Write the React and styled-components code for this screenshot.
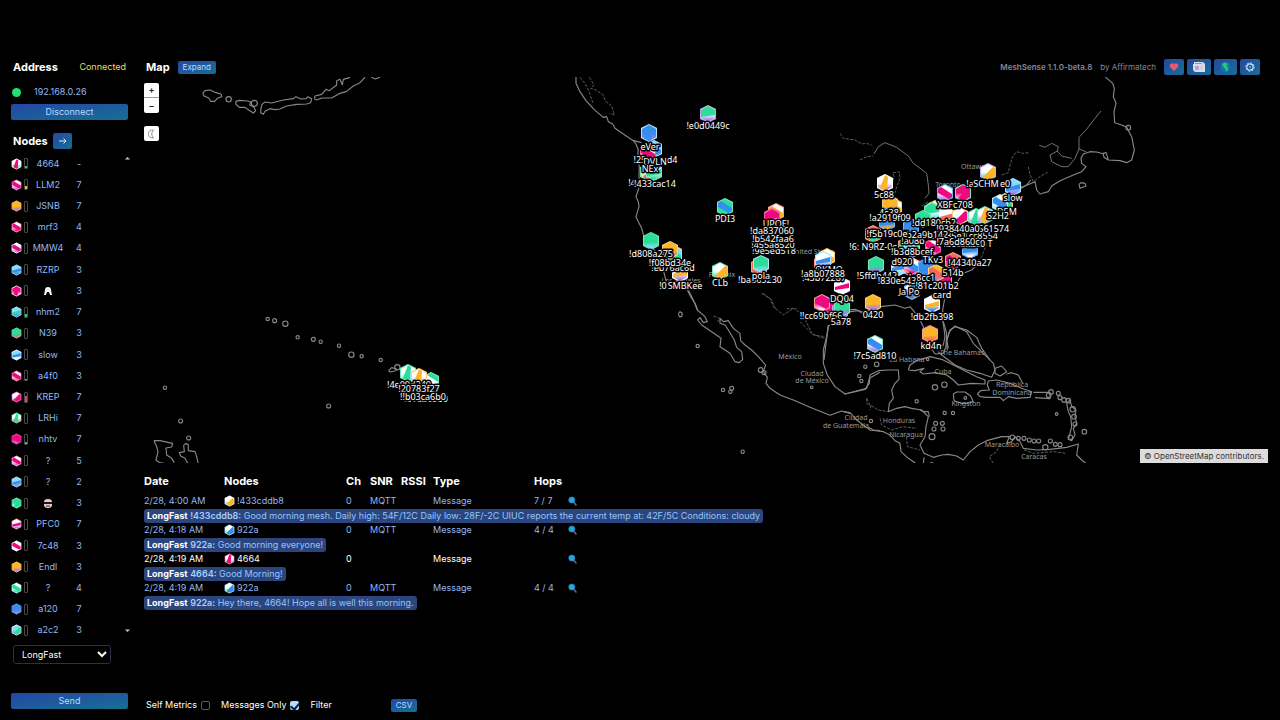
import React from "react";
import styled, { createGlobalStyle } from "styled-components";

const GlobalStyle = createGlobalStyle`
  * {
    box-sizing: border-box;
  }

  body {
    margin: 0;
    background: #000;
    color: #fff;
    font-family: Inter, "Liberation Sans", sans-serif;
    font-size: 9px;
    line-height: 14px;
  }

  button,
  input,
  select {
    font: inherit;
    color: inherit;
  }
`;

const Page = styled.div`
  min-height: 100vh;
  padding: 57px 12px 0 11px;
  display: grid;
  grid-template-columns: 117px minmax(0, 1fr);
  column-gap: 16px;
`;

const Sidebar = styled.aside`
  display: flex;
  flex-direction: column;
  padding-bottom: 11px;
`;

const Main = styled.main`
  display: flex;
  flex-direction: column;
`;

const Title = styled.h2`
  margin: 0;
  font-size: 11px;
  font-weight: 700;
`;

const BarRow = styled.div`
  display: flex;
  align-items: center;
  gap: 8px;
  height: 20px;
  padding: 0 2px;
`;

const Connected = styled.span`
  margin-left: auto;
  color: #e6de62;
`;

const Address = styled.div`
  display: flex;
  align-items: center;
  gap: 13px;
  margin: 8px 0 5px;
  padding-left: 1px;
  color: #93b8f5;
`;

const Dot = styled.span`
  width: 9px;
  height: 9px;
  border-radius: 50%;
  background: #1fe070;
`;

const Button = styled.button`
  display: flex;
  align-items: center;
  justify-content: center;
  height: ${(p) => (p.$small ? 13 : 16)}px;
  width: ${(p) => (p.$wide ? "100%" : "auto")};
  padding: 0 5px;
  border: 0;
  border-radius: 2px;
  background: linear-gradient(to bottom right, #2447a6, #176f93);
  color: #b9dcfb;
  font-size: ${(p) => (p.$small ? 8 : 9)}px;
  line-height: 12px;
`;

const NodesBar = styled(BarRow)`
  margin: 11px 0 2px;
  gap: 5px;
`;

const NodeArea = styled.div`
  flex: 1;
  display: flex;
  justify-content: space-between;
`;

const NodeList = styled.ul`
  display: flex;
  flex-direction: column;
  margin: 0;
  padding: 0;
  list-style: none;
`;

const NodeItem = styled.li`
  flex: 1;
  display: grid;
  grid-template-columns: 11px 4px 36px 22px;
  align-items: center;
  column-gap: 2px;
  color: #93b8f5;
  text-align: center;
`;

const NodeName = styled.span`
  display: flex;
  justify-content: center;
  white-space: nowrap;
`;

const Battery = styled.span`
  display: flex;
  align-items: flex-end;
  height: 11px;
  border: 1px solid #4a4a4a;
  border-radius: 1px;
`;

const Charge = styled.span`
  width: 100%;
  background: ${(p) => p.$color};
`;

const ScrollTrack = styled.div`
  display: flex;
  flex-direction: column;
  justify-content: space-between;
  padding: 3px 0 8px;
  margin-right: -3px;
`;

const ChannelSelect = styled.select`
  width: 98px;
  height: 19px;
  margin: 4px 0 29px 2px;
  padding: 0 0 0 4px;
  border: 1px solid #2a2f4a;
  border-radius: 3px;
  background: #000;
`;

const About = styled.div`
  display: flex;
  align-items: center;
  gap: 8px;
  margin-left: auto;
  padding-right: 6px;
  color: #83869c;
  font-size: 8px;
`;

const Version = styled.span`
  font-weight: 600;
`;

const IconButtons = styled.div`
  display: flex;
  gap: 3px;
`;

const MapPanel = styled.section`
  position: relative;
  flex: 3 1 0;
  min-height: 0;
  overflow: hidden;
`;

const MapSvg = styled.svg`
  position: absolute;
  inset: 0;
  width: 100%;
  height: 100%;
  font-family: "Noto Sans", sans-serif;
`;

const MapControls = styled.div`
  position: absolute;
  top: 6px;
  left: 0;
  display: flex;
  flex-direction: column;
`;

const MapButton = styled.button`
  display: flex;
  align-items: center;
  justify-content: center;
  width: 15px;
  height: 15px;
  padding: 0;
  border: 0;
  border-bottom: ${(p) => (p.$divided ? "1px solid #999" : "0")};
  border-radius: ${(p) => p.$radius || "2px"};
  margin-top: ${(p) => p.$space || 0}px;
  background: #fff;
  color: #222;
  font-weight: 600;
`;

const Attribution = styled.div`
  position: absolute;
  right: 0;
  bottom: 0;
  padding: 0 4px;
  background: #dcdcdc;
  color: #333;
  font-size: 8px;
`;

const Log = styled.section`
  flex: 2 1 0;
  display: flex;
  flex-direction: column;
`;

const LogTable = styled.table`
  border-collapse: collapse;
  table-layout: fixed;
  width: 100%;
  white-space: nowrap;

  th,
  td {
    padding: 0;
    text-align: left;
  }

  th {
    height: 31px;
    padding-top: 5px;
    font-size: 11px;
    font-weight: 700;
  }
`;

const LogRow = styled.tr`
  height: 15px;
  color: ${(p) => (p.$own ? "#fff" : "#93b8f5")};
`;

const NodeCell = styled.span`
  display: flex;
  align-items: center;
  gap: 2px;
`;

const Message = styled.div`
  width: fit-content;
  padding: 0 3px;
  border-radius: 3px;
  background: #2b457f;
  color: #93c5fd;

  b {
    color: #fff;
  }

  strong {
    color: #a5cffb;
    font-weight: 600;
  }
`;

const PlainButton = styled.button`
  display: flex;
  padding: 0;
  border: 0;
  background: none;
`;

const Footer = styled.footer`
  display: flex;
  align-items: center;
  margin-top: auto;
  padding: 0 2px 8px;
`;

const Check = styled.label`
  display: flex;
  align-items: center;
  gap: 4px;
  margin-right: 11px;

  input {
    appearance: none;
    display: grid;
    place-items: center;
    width: 9px;
    height: 9px;
    margin: 0;
    border: 1px solid #5b5b5b;
    border-radius: 2px;
    background: #000;
  }

  input:checked {
    border: 0;
    background: #b5daff;
  }

  input:checked::after {
    content: "";
    width: 4px;
    height: 7px;
    border: solid #0b1f40;
    border-width: 0 2px 2px 0;
    transform: rotate(40deg);
  }
`;

const FilterInput = styled.input`
  width: 53px;
  height: 14px;
  margin: 0 3px;
  padding: 0;
  border: 0;
  background: #000;
`;

const HiddenSvg = styled.svg`
  position: absolute;
`;

const COLORS = {
  p: "#f0087f",
  o: "#fdb428",
  g: "#2ade98",
  b: "#348ef0",
  w: "#ffffff",
  v: "#a878ee",
  c: "#84dcf8",
  r: "#f46a5c",
};

const FACETS = [
  "-7,-4 0,-8 7,-4 7,1 -7,3",
  "-7,-4 -4,-6 7,1 7,4 4,6 -7,0",
  "0,-8 3,-6 2,7 0,8 -5,5",
  "5,-5 7,-4 7,4 0,8 -5,5",
  "-7,1 7,-3 7,2 -7,4",
];

const HexDefs = () => (
  <HiddenSvg width="0" height="0" aria-hidden="true">
    <defs>
      {Object.keys(COLORS).map((key) => (
        <linearGradient key={key} id={`fade-${key}`} x1="0" y1="0" x2="0" y2="1">
          <stop offset="0.5" stopColor={COLORS[key]} stopOpacity="0" />
          <stop offset="0.9" stopColor={COLORS[key]} />
        </linearGradient>
      ))}
    </defs>
  </HiddenSvg>
);

// code: base, facet, lower corner, ring, then the facet index
const Hex = ({ code }) => {
  const [base, facet, corner, ring, shape] = code;
  return (
    <g>
      <polygon points="0,-9 8,-5 8,5 0,9 -8,5 -8,-5" fill={COLORS[ring]} />
      <polygon points="0,-9 8,-5 8,5 0,9 -8,5 -8,-5" fill="#fff" opacity="0.35" />
      <polygon points="0,-8 7,-4 7,4 0,8 -7,4 -7,-4" fill={COLORS[base]} />
      <polygon points="0,-8 7,-4 7,4 0,8 -7,4 -7,-4" fill={`url(#fade-${corner})`} />
      <polygon points={FACETS[shape]} fill={COLORS[facet]} />
    </g>
  );
};

const HexIcon = ({ code }) => (
  <svg width="11" height="12" viewBox="-9 -10 18 20">
    <Hex code={code} />
  </svg>
);

const NODES = [
  { name: "4664", hops: "-", code: "wpgw2", level: 2, color: "#2bd06a" },
  { name: "LLM2", hops: 7, code: "wpvp1", level: 3, color: "#d8d040" },
  { name: "JSNB", hops: 7, code: "oovo0" },
  { name: "mrf3", hops: 4, code: "wppr1" },
  { name: "MMW4", hops: 4, code: "wpvw1" },
  { name: "RZRP", hops: 3, code: "cbbc4" },
  { name: "hood", hops: 3, code: "ppww2" },
  { name: "nhm2", hops: 7, code: "cgbc4", level: 3, color: "#2bd06a" },
  { name: "N39", hops: 3, code: "ggrg0" },
  { name: "slow", hops: 3, code: "cbww4" },
  { name: "a4f0", hops: 3, code: "wprp1", level: 1, color: "#2bd06a" },
  { name: "KREP", hops: 7, code: "wpvp3", level: 6, color: "#d04a62" },
  { name: "LRHi", hops: 7, code: "wgrg2" },
  { name: "nhtv", hops: 7, code: "ppvp1", level: 2, color: "#2bd06a" },
  { name: "?", hops: 5, code: "wpvr1" },
  { name: "?", hops: 2, code: "cbvc4" },
  { name: "mask", hops: 3, code: "ggwg3" },
  { name: "PFC0", hops: 7, code: "wpvr4" },
  { name: "7c48", hops: 3, code: "wpww1" },
  { name: "Endl", hops: 3, code: "oovo0" },
  { name: "?", hops: 4, code: "wggc1" },
  { name: "a120", hops: 7, code: "bbvb0" },
  { name: "a2c2", hops: 3, code: "cgvw3" },
];

const GLYPHS = {
  hood: (
    <svg width="10" height="10" viewBox="0 0 10 10" role="img" aria-label="hood">
      <path d="M1 9 2 4a3 3 0 0 1 6 0l1 5-2 0-1-3H4L3 9z" fill="#f2f2f2" />
      <path d="M4 9 5 6l1 3z" fill="#000" />
    </svg>
  ),
  mask: (
    <svg width="10" height="10" viewBox="0 0 10 10" role="img" aria-label="mask">
      <path d="M1 4a4 3 0 0 1 8 0v3a4 3 0 0 1-8 0z" fill="#e8c9c4" />
      <path d="M1 4h8v2H1z" fill="#1a1a1a" />
      <path d="M3 8h4" stroke="#333" />
    </svg>
  ),
};

// Coastline tiles, drawn at three units to the pixel
const TILES = [
  {
    x: 180,
    y: 70,
    lines: [
      "68,70 75,62 90,60 108,68 123,72 125,80 112,85 104,94 92,94 86,84 72,78 68,70",
      "167,102 168,94 178,91 203,93 212,96 209,104 222,112 227,122 220,129 206,120 195,112 178,112 167,102",
      "243,115 246,103 255,96 275,99 310,90 340,86 348,80 362,87 378,86 384,80 395,86 392,98 380,102 350,103 320,108 300,117 285,119 270,116 255,124 250,133 242,128 243,115",
      "403,86 405,78 425,73 438,58 448,62 470,45 470,32 480,28 487,44 490,28 510,22",
      "403,86 410,90 425,84 455,84 480,70 500,64 520,48 540,38 555,22",
      "574,22 586,27 600,22",
    ],
    dots: [[146, 88, 8], [223, 100, 9]],
  },
  {
    x: 570,
    y: 70,
    lines: [
      "18,20 18,40 30,65 48,92 72,118 100,142 110,140 115,155 128,162 135,175 160,192 190,212 215,218",
      "190,212 198,222 205,240 203,262 208,290 207,320 210,345 198,380 205,395 207,410 198,440 205,455 215,475 222,500 245,530 262,552 275,580 290,640 325,650 352,660 362,680 375,700 383,720",
    ],
    faint: [
      "30,22 45,40 58,65 62,80 70,102",
      "58,22 72,45 62,55 78,60 100,75 105,92 125,108 133,135 118,130",
      "580,670 605,690 618,720",
      "650,716 680,715",
    ],
  },
  {
    x: 980,
    y: 50,
    lines: [
      "375,80 398,100 403,115 400,140 408,160 402,185 404,218 425,225 440,232 455,260 463,300 455,330 440,338 420,332 385,330 372,322 369,310 378,308 385,328",
      "372,312 350,306 330,305 310,312 303,325 305,340 318,350 305,365 280,375 240,392 215,408 205,425 180,432 170,420 165,395 135,408 110,415",
      "297,403 303,398 315,400 318,408 300,415 297,403",
    ],
    thin: [
      "363,183 345,205 318,240 297,262 297,297 318,305",
      "297,297 285,325 265,350 245,350 215,335 210,315 232,303 235,290 215,280 195,292 178,286",
      "232,303 245,318 275,325",
    ],
    faint: [
      "65,375 85,368 90,345 98,320 110,305 128,310 148,308",
      "145,350 150,375 160,395 180,380 205,365",
    ],
    dots: [[445, 233, 7]],
  },
  {
    x: 800,
    y: 130,
    lines: [
      "145,540 165,538 185,545 220,540 240,530 285,525 315,535 330,530 345,548 355,560 370,590 375,620 388,645 405,672",
      "530,405 515,420 490,430 465,465 435,500 428,540 430,575 440,610 438,650 430,670 405,672",
      "145,540 110,565 85,590 78,640 72,690",
      "445,655 440,630 450,600 465,590 500,600 530,622 545,655 570,690",
      "692,150 680,165 655,180 640,200 615,225 600,245",
    ],
    thin: ["222,72 235,50 255,38 290,52 325,78 340,100 370,122 380,130 385,165 387,190 375,205"],
    faint: [
      "120,10 130,25 165,30 185,42 200,40 215,46",
      "180,90 200,80 220,78",
      "268,190 282,140 278,128 298,126 300,145 290,170 282,200",
      "365,228 385,215 400,222",
      "0,575 20,595 40,615 75,620",
      "560,340 545,380 520,410",
    ],
  },
  {
    x: 620,
    y: 290,
    lines: [
      "205,0 220,30 232,60 255,80 262,95 250,98 240,83 233,90 245,105 275,125 303,145 300,170 330,190 345,215 358,218 368,208 365,185 350,172 343,150 325,120 315,105 300,100 300,85 310,95 325,92 340,115 360,130 362,152 375,165 395,180 415,200 437,225 430,245 442,262 438,280 450,295 480,315 520,330 570,352 630,376 665,363 690,370",
      "625,105 620,140 610,180 610,220 622,255 645,290 675,312 720,300 740,295 748,265 780,247",
      "745,412 760,420 780,422",
      "690,65 715,62 735,75",
      "175,72 180,65 187,70 185,80 178,80 175,72",
    ],
    faint: [
      "425,10 450,25 460,50 490,75 505,65 520,55 550,75 575,130 600,142 618,145",
      "740,325 740,340 753,350 750,360",
      "280,78 300,85 290,98",
    ],
    dots: [[233, 168, 5], [309, 300, 5], [335, 295, 6], [331, 305, 5], [368, 485, 5], [575, 292, 4], [422, 240, 7], [432, 248, 6]],
  },
  {
    x: 820,
    y: 320,
    lines: [
      "75,222 135,208 148,190 150,165 175,152 205,150 235,150 237,178 225,190 215,210 220,235 208,250 205,275 230,265 255,260 275,265 305,270 325,290 318,320 315,350 300,375 312,400 340,412 365,405 385,403 410,408 430,420 450,395 475,375 500,362 545,350 568,350 560,370 575,365 585,350 600,365 610,385 650,390 690,388 740,382 775,372 770,405 785,420 800,432",
      "70,275 90,278 110,300 150,330 190,335 210,345 225,362 240,370 243,395 265,415 290,432",
      "310,432 312,412",
      "265,150 270,135 290,122 330,110 365,118 400,135 440,155 470,170 495,180 495,192 455,190 415,195 400,180 380,165 345,158 310,162 300,155 312,145 285,152 265,150",
      "400,222 410,216 435,216 452,228 460,245 440,250 425,250 402,242 400,222",
      "472,222 482,212 508,210 502,195 505,183 530,180 570,190 605,205 635,215 630,232 590,235 565,230 550,242 540,232 500,232 480,230 472,222",
      "640,217 690,217 690,236 645,233",
      "368,0 372,25 375,50 370,75 355,88 345,70 330,50",
      "382,92 380,65 388,35 405,18 440,35 460,70 490,100 520,130 525,150 515,172 480,160 440,150 405,135 365,105 355,95",
      "525,145 545,138 560,155 540,168 525,160 525,145",
      "560,162 575,158 595,165 608,190",
      "740,250 750,240 755,260 768,270 765,290 770,310 760,325 765,345 755,362 745,358 750,340 755,320 752,290 745,275 740,250",
      "300,270 310,275 325,275 328,290",
    ],
    faint: [
      "140,235 150,255 175,270 205,275",
      "180,295 185,315 215,330 250,320 290,325",
      "260,350 262,380 300,390",
      "520,430 508,410 530,395 540,372",
      "612,390 640,400 700,395 740,400",
    ],
    dots: [
      [136, 140, 5], [170, 133, 7], [118, 168, 5], [124, 183, 5], [290, 244, 5], [345, 202, 8], [373, 194, 8],
      [374, 279, 5], [399, 279, 5], [347, 310, 6], [367, 310, 6], [342, 327, 6], [369, 327, 6], [336, 350, 9],
      [686, 226, 7], [693, 216, 7], [715, 220, 6], [720, 233, 6], [732, 240, 7], [745, 242, 7], [758, 268, 8],
      [762, 290, 7], [765, 312, 6], [710, 282, 4], [793, 335, 7], [751, 352, 7], [595, 355, 6], [612, 355, 6],
      [628, 360, 6], [642, 363, 6], [656, 363, 6], [691, 363, 6], [706, 373, 6], [676, 382, 8], [720, 374, 6],
      [436, 234, 4], [153, 303, 5], [323, 118, 4], [577, 352, 7],
    ],
  },
  {
    x: 130,
    y: 300,
    lines: [
      "72,422 90,422 128,430 125,441 108,444 110,465 125,475 133,488",
      "72,422 80,440 84,455 78,480 88,488 102,490",
      "205,493 200,470 195,455 175,452 175,435 168,430 161,436 163,455 148,458 152,468 165,475 172,488 183,493",
      "776,212 785,203 800,207 795,213 780,216 776,212",
    ],
    dots: [
      [413, 57, 5], [434, 62, 6], [466, 71, 8], [503, 112, 5], [550, 118, 6], [572, 125, 5], [627, 137, 5],
      [664, 164, 8], [695, 169, 5], [752, 180, 5], [596, 318, 6], [105, 263, 5], [152, 363, 6], [176, 414, 6], [802, 202, 8],
    ],
  },
];

const PLACES = [
  ["Ottawa", 973, 169],
  ["Toronto", 948, 187],
  ["United States", 812, 254],
  ["Phoenix", 722, 277],
  ["Los Angeles", 681, 283],
  ["México", 790, 359],
  ["Ciudad", 812, 376],
  ["de México", 812, 383],
  ["Ciudad", 856, 420],
  ["de Guatemala", 846, 428],
  ["La Habana", 907, 362],
  ["The Bahamas", 962, 355],
  ["Cuba", 943, 374],
  ["República", 1012, 387],
  ["Dominicana", 1012, 395],
  ["Kingston", 966, 406],
  ["Honduras", 899, 423],
  ["Nicaragua", 906, 437],
  ["Maracaibo", 1002, 447],
  ["Caracas", 1034, 459],
  ["Panama", 943, 467],
];

const HEXES = [
  [708, 114, "wgvv0"],
  [654, 149, "cbgc1"],
  [648, 153, "wppp1"],
  [649, 133, "bbvc2"],
  [648, 172, "wrog3"],
  [654, 172, "wggg4"],
  [725, 207, "gbgg1"],
  [776, 212, "woor1"],
  [772, 217, "wppp0"],
  [651, 241, "ggcg0"],
  [674, 254, "cgbo1"],
  [670, 250, "oovo0"],
  [680, 273, "wovw4"],
  [720, 271, "wogg3"],
  [759, 267, "rrrr0"],
  [761, 264, "ggcc0"],
  [827, 257, "wogo1"],
  [822, 264, "obrr3"],
  [823, 260, "wbvc4"],
  [842, 286, "wpww4"],
  [832, 306, "pppp1"],
  [822, 303, "ppwr1"],
  [840, 311, "vvpv1"],
  [842, 308, "ggvg0"],
  [873, 303, "oovo0"],
  [875, 344, "wbvg1"],
  [930, 334, "oorr0"],
  [932, 304, "wobw4"],
  [885, 183, "wovw2"],
  [894, 207, "wogo1"],
  [890, 204, "oobo4"],
  [887, 222, "bbob4"],
  [873, 234, "rgor3"],
  [876, 265, "ggvg0"],
  [1005, 202, "wgbo1"],
  [1013, 187, "cbvc4"],
  [1000, 203, "wbcc1"],
  [988, 172, "wogv3"],
  [945, 193, "wpvb1"],
  [963, 193, "ppwg3"],
  [935, 209, "wcoo1"],
  [932, 211, "wgcg0"],
  [923, 219, "gggg0"],
  [911, 227, "bbvb1"],
  [947, 216, "wrow4"],
  [960, 216, "wpvo3"],
  [976, 217, "wgvg2"],
  [985, 215, "wovg2"],
  [906, 246, "gggr3"],
  [912, 249, "cgvc4"],
  [933, 247, "wprp1"],
  [970, 250, "bbwb0"],
  [953, 261, "rppr1"],
  [911, 268, "bppb3"],
  [899, 267, "wbcc4"],
  [912, 266, "wbpr1"],
  [926, 267, "bbbb3"],
  [944, 281, "pppv0"],
  [936, 273, "orvo1"],
  [912, 291, "wbrb2"],
  [431, 381, "gwgg1"],
  [408, 373, "wgcg2"],
  [419, 377, "wovo2"],
];

// Later names lie over earlier ones
const LABELS = [
  ["!e0d0449c", 708, 126],
  ["!25c", 642, 160],
  ["d4", 672, 160],
  ["eVer", 650, 147],
  ["DVLN", 655, 162],
  ["NEx", 650, 169],
  ["!4", 632, 183],
  ["!433cac14", 655, 184],
  ["PDI3", 725, 219],
  ["UPOE!", 776, 224],
  ["!9e5ed518", 774, 251],
  ["!455a8520", 773, 245],
  ["!b542faa6", 773, 239],
  ["!da837060", 772, 231],
  ["!d808a275", 651, 254],
  ["!eb76ac6d", 673, 268],
  ["!f08bd34e", 670, 263],
  ["!0", 663, 286],
  ["SMBKee", 685, 286],
  ["CLb", 720, 283],
  ["!ba865230", 760, 280],
  ["pola", 761, 276],
  ["OKMO", 829, 270],
  ["!43b72287", 824, 278],
  ["!a8b07888", 823, 274],
  ["DQ04", 842, 299],
  ["!!cc69bf66", 821, 316],
  ["5a78", 841, 322],
  ["0420", 873, 315],
  ["!7c5ad810", 875, 356],
  ["kd4n", 931, 346],
  ["!db2fb398", 932, 317],
  ["5c88", 884, 195],
  ["4c38", 889, 213],
  ["!a2919f09", 890, 218],
  ["!5ffdb442", 877, 276],
  ["!a", 970, 184],
  ["SCHM", 986, 184],
  ["e0", 1005, 184],
  ["slow", 1013, 198],
  ["XBFc708", 955, 205],
  ["D5M", 1007, 212],
  ["S2H2", 998, 216],
  ["!dd180cb2", 934, 223],
  ["!41cc8554", 977, 236],
  ["!a4c85e1", 948, 236],
  ["!26c3a2c0 T", 968, 244],
  ["!a561574", 990, 229],
  ["!938440a0", 958, 229],
  ["!a08b", 913, 241],
  ["!b2a9b142", 926, 235],
  ["!f5b19c0e", 887, 234],
  ["!7a6d860c", 958, 242],
  ["!6: N9RZ-0c", 873, 247],
  ["!b3d8bcef", 912, 252],
  ["TKv3", 933, 260],
  ["d920", 902, 262],
  ["!44340a27", 970, 263],
  ["514b", 953, 273],
  ["!a8cc1", 922, 278],
  ["!830e543", 897, 281],
  ["!81c201b2", 937, 286],
  ["Ja Po", 909, 292],
  ["card", 942, 295],
  ["!4e00d240", 409, 385],
  ["!61a2e5b0", 426, 399],
  ["!20783f27", 419, 389],
  ["!!b03ca6b0", 423, 397],
];

const WorldMap = () => (
  <MapSvg viewBox="144 77 1124 386" preserveAspectRatio="xMinYMin slice">
    {TILES.map((t) => (
      <g
        key={`${t.x}-${t.y}`}
        transform={`translate(${t.x} ${t.y}) scale(${1 / 3})`}
        fill="none"
        stroke="#888"
        strokeWidth="3.4"
        strokeLinejoin="round"
      >
        {t.lines.map((points) => (
          <polyline key={points} points={points} />
        ))}
        {(t.thin || []).map((points) => (
          <polyline key={points} points={points} stroke="#727272" strokeWidth="3" />
        ))}
        {(t.faint || []).map((points) => (
          <polyline key={points} points={points} stroke="#5c5c5c" strokeWidth="3" strokeDasharray="9 4" />
        ))}
        {(t.dots || []).map(([x, y, r]) => (
          <circle key={`${x}-${y}`} cx={x} cy={y} r={r} />
        ))}
      </g>
    ))}
    <g fill="#9a9a9a" fontSize="7" textAnchor="middle">
      {PLACES.map(([name, x, y]) => (
        <text key={`${name}-${y}`} x={x} y={y}>
          {name}
        </text>
      ))}
    </g>
    {HEXES.map(([x, y, code], i) => (
      <g key={i} transform={`translate(${x} ${y})`}>
        <Hex code={code} />
      </g>
    ))}
    <g fill="#fff" stroke="#000" strokeWidth="3" strokeLinejoin="round" fontSize="9" textAnchor="middle">
      {LABELS.map(([name, x, y]) => (
        <text key={name} x={x} y={y + 3} paintOrder="stroke">
          {name}
        </text>
      ))}
    </g>
  </MapSvg>
);

const HeartIcon = () => (
  <svg width="10" height="10" viewBox="0 0 10 10">
    <path d="M5 9 1.300 5.200A2.300 2.300 0 0 1 5 2.200a2.300 2.300 0 0 1 3.700 3z" fill="#e8596b" />
  </svg>
);

const NewsIcon = () => (
  <svg width="14" height="12" viewBox="0 0 14 12">
    <path d="M2 1h9l2 2v8H3L1 9V3h1z" fill="#d9dde6" />
    <path d="M3 2.500h7" stroke="#8a93a8" />
    <path d="M3 5h4v4H3z" fill="#b7a6c9" />
    <path d="M8 5.500h3M8 7.500h3" stroke="#b4bccd" strokeWidth="0.700" />
  </svg>
);

const GlobeIcon = () => (
  <svg width="13" height="12" viewBox="0 0 13 12">
    <circle cx="6.500" cy="6" r="5" fill="#1575a8" />
    <path d="M3 3 6 1.500 9 3 7.500 5 9 6.500 8.500 10 7 10.500 6.500 8 4.500 6z" fill="#27c77a" />
  </svg>
);

const GearIcon = () => (
  <svg width="10" height="10" viewBox="0 0 10 10" fill="none" stroke="#cfe6fb">
    <circle cx="5" cy="5" r="3.200" strokeWidth="1.200" />
    <circle cx="5" cy="5" r="4.300" strokeWidth="1" strokeDasharray="1.300 2.080" />
    <circle cx="5" cy="5" r="0.800" fill="#cfe6fb" stroke="none" />
  </svg>
);

const LensIcon = () => (
  <svg width="9" height="10" viewBox="0 0 9 10">
    <path d="m5.500 6 2.500 3" stroke="#7b5d96" strokeWidth="1.600" strokeLinecap="round" />
    <circle cx="3.800" cy="4" r="3.100" fill="#1ea7e0" stroke="#2f7fb4" strokeWidth="0.600" />
  </svg>
);

const ArrowIcon = () => (
  <svg width="9" height="8" viewBox="0 0 9 8" fill="none" stroke="#d7ebff">
    <path d="M1 4h7M5.500 1.500 8 4 5.500 6.500" />
  </svg>
);

const MoonIcon = () => (
  <svg width="8" height="10" viewBox="0 0 8 10" fill="none" stroke="#777" strokeWidth="0.800">
    <path d="M5.500 1.200A4 4 0 1 0 5.500 8.800 5 5 0 0 1 5.500 1.200z" />
  </svg>
);

const ScrollArrow = ({ d }) => (
  <svg width="7" height="4" viewBox="0 0 7 4">
    <path d={d} fill="#ccc" />
  </svg>
);

const PACKETS = [
  {
    date: "2/28, 4:00 AM",
    node: "!433cddb8",
    code: "wogw3",
    snr: "MQTT",
    hops: "7 / 7",
    text: "Good morning mesh. Daily high: 54F/12C Daily low: 28F/-2C UIUC reports the current temp at: 42F/5C Conditions: cloudy",
  },
  { date: "2/28, 4:18 AM", node: "922a", code: "wbgc3", snr: "MQTT", hops: "4 / 4", text: "Good morning everyone!" },
  { date: "2/28, 4:19 AM", node: "4664", code: "wpgp2", own: true, text: "Good Morning!" },
  {
    date: "2/28, 4:19 AM",
    node: "922a",
    code: "wbgc3",
    snr: "MQTT",
    hops: "4 / 4",
    text: "Hey there, 4664! Hope all is well this morning.",
  },
];

const App = () => {
  return (
    <Page>
      <GlobalStyle />
      <HexDefs />
      <Sidebar>
        <BarRow>
          <Title>Address</Title>
          <Connected>Connected</Connected>
        </BarRow>
        <Address>
          <Dot />
          <span>192.168.0.26</span>
        </Address>
        <Button type="button" $wide>
          Disconnect
        </Button>
        <NodesBar>
          <Title>Nodes</Title>
          <Button type="button" aria-label="Show node details">
            <ArrowIcon />
          </Button>
        </NodesBar>
        <NodeArea>
          <NodeList>
            {NODES.map((node, i) => (
              <NodeItem key={i}>
                <HexIcon code={node.code} />
                <Battery>
                  <Charge $color={node.color || "none"} style={{ height: node.level || 0 }} />
                </Battery>
                <NodeName>{GLYPHS[node.name] || node.name}</NodeName>
                <span>{node.hops}</span>
              </NodeItem>
            ))}
          </NodeList>
          <ScrollTrack>
            <ScrollArrow d="M1 3.500h5L3.500 1z" />
            <ScrollArrow d="M1 0.500h5L3.500 3z" />
          </ScrollTrack>
        </NodeArea>
        <ChannelSelect aria-label="Channel" defaultValue="LongFast">
          <option>LongFast</option>
        </ChannelSelect>
        <Button type="button" $wide>
          Send
        </Button>
      </Sidebar>

      <Main>
        <BarRow>
          <Title>Map</Title>
          <Button type="button" $small>
            Expand
          </Button>
          <About>
            <Version>MeshSense 1.1.0-beta.8</Version>
            <span>by Affirmatech</span>
            <IconButtons>
              <Button type="button" aria-label="Sponsor">
                <HeartIcon />
              </Button>
              <Button type="button" aria-label="News">
                <NewsIcon />
              </Button>
              <Button type="button" aria-label="Global map">
                <GlobeIcon />
              </Button>
              <Button type="button" aria-label="Settings">
                <GearIcon />
              </Button>
            </IconButtons>
          </About>
        </BarRow>

        <MapPanel>
          <WorldMap />
          <MapControls>
            <MapButton type="button" $divided $radius="2px 2px 0 0" aria-label="Zoom in">
              +
            </MapButton>
            <MapButton type="button" $radius="0 0 2px 2px" aria-label="Zoom out">
              −
            </MapButton>
            <MapButton type="button" $space={13} aria-label="Dark mode">
              <MoonIcon />
            </MapButton>
          </MapControls>
          <Attribution>© OpenStreetMap contributors.</Attribution>
        </MapPanel>

        <Log>
          <LogTable>
            <colgroup>
              <col style={{ width: 80 }} />
              <col style={{ width: 122 }} />
              <col style={{ width: 24 }} />
              <col style={{ width: 31 }} />
              <col style={{ width: 32 }} />
              <col style={{ width: 101 }} />
              <col style={{ width: 34 }} />
              <col />
            </colgroup>
            <thead>
              <tr>
                <th>Date</th>
                <th>Nodes</th>
                <th>Ch</th>
                <th>SNR</th>
                <th>RSSI</th>
                <th>Type</th>
                <th>Hops</th>
                <th aria-label="Details" />
              </tr>
            </thead>
            <tbody>
              {PACKETS.map((packet, i) => (
                <React.Fragment key={i}>
                  <LogRow $own={packet.own}>
                    <td>{packet.date}</td>
                    <td>
                      <NodeCell>
                        <HexIcon code={packet.code} />
                        {packet.node}
                      </NodeCell>
                    </td>
                    <td>0</td>
                    <td>{packet.snr}</td>
                    <td />
                    <td>Message</td>
                    <td>{packet.hops}</td>
                    <td>
                      <PlainButton type="button" aria-label="Inspect packet">
                        <LensIcon />
                      </PlainButton>
                    </td>
                  </LogRow>
                  <tr>
                    <td colSpan="8">
                      <Message>
                        <b>LongFast</b> <strong>{packet.node}:</strong> {packet.text}
                      </Message>
                    </td>
                  </tr>
                </React.Fragment>
              ))}
            </tbody>
          </LogTable>
          <Footer>
            <Check>
              Self Metrics
              <input type="checkbox" />
            </Check>
            <Check>
              Messages Only
              <input type="checkbox" defaultChecked />
            </Check>
            <label htmlFor="filter">Filter</label>
            <FilterInput id="filter" type="text" />
            <Button type="button" $small>
              CSV
            </Button>
          </Footer>
        </Log>
      </Main>
    </Page>
  );
};

export default App;
